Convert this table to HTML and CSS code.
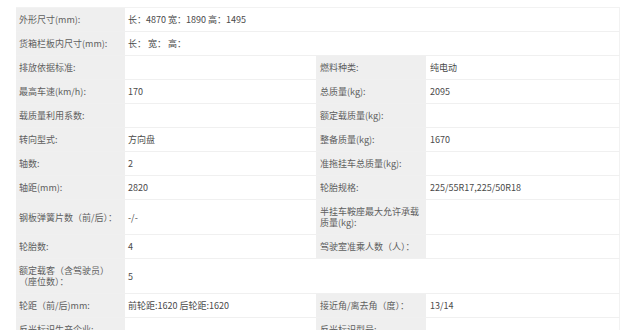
FILE: index.html
```html
<!DOCTYPE html>
<html lang="zh">
<head>
<meta charset="utf-8">
<link rel="stylesheet" href="styles.css">
</head>
<body>
<table class="spec">
  <colgroup>
    <col class="c-l1"><col class="c-v1"><col class="c-l2"><col class="c-v2">
  </colgroup>
  <tr><td class="lbl">外形尺寸(mm):</td><td class="val" colspan="3">长：4870 宽：1890 高：1495</td></tr>
  <tr><td class="lbl">货箱栏板内尺寸(mm):</td><td class="val" colspan="3">长：&nbsp;宽：&nbsp;高：</td></tr>
  <tr><td class="lbl">排放依据标准:</td><td class="val"></td><td class="lbl r">燃料种类:</td><td class="val r">纯电动</td></tr>
  <tr><td class="lbl">最高车速(km/h):</td><td class="val">170</td><td class="lbl r">总质量(kg):</td><td class="val r">2095</td></tr>
  <tr><td class="lbl">载质量利用系数:</td><td class="val"></td><td class="lbl r">额定载质量(kg):</td><td class="val r"></td></tr>
  <tr><td class="lbl">转向型式:</td><td class="val">方向盘</td><td class="lbl r">整备质量(kg):</td><td class="val r">1670</td></tr>
  <tr><td class="lbl">轴数:</td><td class="val">2</td><td class="lbl r">准拖挂车总质量(kg):</td><td class="val r"></td></tr>
  <tr><td class="lbl">轴距(mm):</td><td class="val">2820</td><td class="lbl r">轮胎规格:</td><td class="val r">225/55R17,225/50R18</td></tr>
  <tr><td class="lbl">钢板弹簧片数（前/后）：</td><td class="val">-/-</td><td class="lbl r">半挂车鞍座最大允许承载质量(kg):</td><td class="val r"></td></tr>
  <tr><td class="lbl">轮胎数:</td><td class="val">4</td><td class="lbl r">驾驶室准乘人数（人）：</td><td class="val r"></td></tr>
  <tr><td class="lbl">额定载客（含驾驶员）（座位数）：</td><td class="val" colspan="3">5</td></tr>
  <tr><td class="lbl">轮距（前/后)mm:</td><td class="val">前轮距:1620 后轮距:1620</td><td class="lbl r">接近角/离去角（度）：</td><td class="val r">13/14</td></tr>
  <tr><td class="lbl">反光标识生产企业:</td><td class="val"></td><td class="lbl r">反光标识型号:</td><td class="val r"></td></tr>
</table>
</body>
</html>
```
FILE: styles.css
```css
html, body {
  margin: 0;
  padding: 0;
  background: #ffffff;
}
body {
  padding: 7px 0 0 16px;
  font-family: "Noto Sans CJK SC", "Noto Sans", sans-serif;
  font-size: 9px;
  color: #555555;
}
.spec {
  border-collapse: collapse;
  table-layout: fixed;
  width: 603px;
  border-top: 1px solid #f2f2f2;
  border-right: 1px solid #f2f2f2;
}
.c-l1 { width: 109px; }
.c-v1 { width: 191px; }
.c-l2 { width: 110px; }
.c-v2 { width: 193px; }
.spec td {
  padding: 6px 4px 6px 3px;
  line-height: 11px;
  border-bottom: 1px solid #f0f0f0;
  vertical-align: middle;
  word-break: break-all;
}
.spec td.r {
  padding-left: 4px;
}
.lbl {
  background: #efefef;
  color: #5e5e5e;
}
.val {
  background: #ffffff;
  color: #4a4a4a;
}
```
